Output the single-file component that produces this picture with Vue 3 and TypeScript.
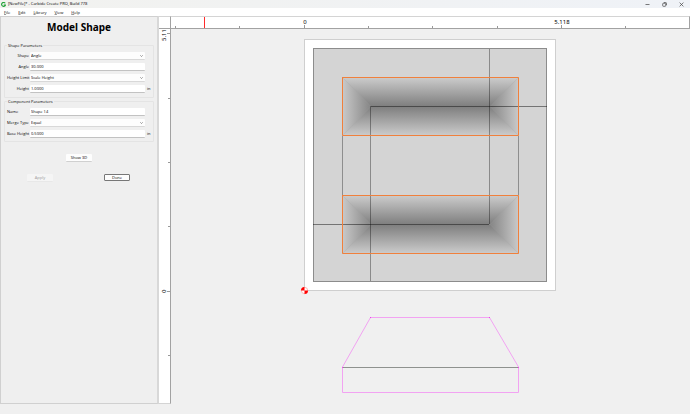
<script setup lang="ts">
import { ref } from 'vue'

const menus = ['File', 'Edit', 'Library', 'View', 'Help']
const shape = ref('Angle')
const angle = ref('30.000')
const limit = ref('Scale Height')
const height = ref('1.0000')
const name = ref('Shape 14')
const merge = ref('Equal')
const base = ref('0.5000')

// Ruler marks, measured from the start of each ruler
const topTicks = [5, 69, 134, 198, 262, 327, 391, 455]
const sideTicks = [4, 69, 133, 197, 262, 326]

// Top edges of the two selected angle shapes on the stock
const bevels = [48, 166]
</script>

<template>
  <div class="window">
    <header class="titlebar">
      <svg class="logo" width="5" height="5" viewBox="0 0 10 10">
        <path d="M8.5 2.6A4 4 0 1 0 9 6H5.5" fill="none" stroke="#23a33a" stroke-width="2.2" />
      </svg>
      <span class="caption">[NewFile]* - Carbide Create PRO, Build 778</span>
      <div class="controls">
        <button type="button" aria-label="Minimize">
          <svg width="5" height="5"><path d="M0.5 2.5h4" /></svg>
        </button>
        <button type="button" aria-label="Restore">
          <svg width="5" height="5"><rect x="0.7" y="1.3" width="3" height="3" rx="0.6" /><path d="M1.8 0.5h1.8q.9 0 .9.9v1.8" /></svg>
        </button>
        <button type="button" aria-label="Close">
          <svg width="5" height="5"><path d="M0.6 0.6l3.8 3.8M4.4 0.6l-3.8 3.8" /></svg>
        </button>
      </div>
    </header>

    <nav class="menubar">
      <a v-for="m in menus" :key="m" href="#"><u>{{ m[0] }}</u>{{ m.slice(1) }}</a>
    </nav>

    <main class="body">
      <form class="panel" @submit.prevent>
        <h1>Model Shape</h1>
        <fieldset class="first">
          <legend>Shape Parameters</legend>
          <div class="row">
            <label for="shape">Shape</label>
            <div class="pick">
              <select id="shape" v-model="shape"><option>Angle</option><option>Round</option><option>Flat</option></select>
              <svg width="3" height="2"><path d="M0.3 0.3l1.2 1.2 1.2-1.2" /></svg>
            </div>
          </div>
          <div class="row">
            <label for="angle">Angle</label>
            <input id="angle" v-model="angle" type="text" />
          </div>
          <div class="row">
            <label for="limit">Height Limit</label>
            <div class="pick">
              <select id="limit" v-model="limit"><option>Scale Height</option><option>No Limit</option></select>
              <svg width="3" height="2"><path d="M0.3 0.3l1.2 1.2 1.2-1.2" /></svg>
            </div>
          </div>
          <div class="row">
            <label for="height">Height</label>
            <input id="height" v-model="height" type="text" />
            <span>in</span>
          </div>
        </fieldset>
        <fieldset class="second">
          <legend>Component Parameters</legend>
          <div class="row">
            <label for="name">Name</label>
            <input id="name" v-model="name" type="text" />
          </div>
          <div class="row">
            <label for="merge">Merge Type</label>
            <div class="pick">
              <select id="merge" v-model="merge"><option>Equal</option><option>Add</option><option>Subtract</option></select>
              <svg width="3" height="2"><path d="M0.3 0.3l1.2 1.2 1.2-1.2" /></svg>
            </div>
          </div>
          <div class="row">
            <label for="base">Base Height</label>
            <input id="base" v-model="base" type="text" />
            <span>in</span>
          </div>
        </fieldset>
        <div class="preview"><button type="button">Show 3D</button></div>
        <div class="actions">
          <button type="button" disabled>Apply</button>
          <button type="submit" class="default">Done</button>
        </div>
      </form>

      <section class="workspace">
        <div class="corner"></div>
        <svg class="ruler top">
          <path v-for="(x, i) in topTicks" :key="x" :d="`M${x - 0.5} 12V${i === 2 || i === 6 ? 8 : 9}`" stroke="#999" />
          <path d="M33.5 0V12" stroke="#ff2a2a" />
          <text x="134" y="7" text-anchor="middle">0</text>
          <text x="391" y="7" text-anchor="middle">5.118</text>
        </svg>
        <svg class="ruler side">
          <path v-for="(y, i) in sideTicks" :key="y" :d="`M12 ${y + 0.5}H${i === 0 || i === 4 ? 8 : 9}`" stroke="#999" />
          <text transform="translate(7 12) rotate(-90)">5.11</text>
          <text transform="translate(7 264) rotate(-90)">0</text>
        </svg>
        <svg class="canvas">
          <defs>
            <linearGradient id="down" x1="0" y1="0" x2="0" y2="1">
              <stop offset="0" stop-color="#cdcdcd" /><stop offset="1" stop-color="#7e7e7e" />
            </linearGradient>
            <linearGradient id="up" x1="0" y1="1" x2="0" y2="0">
              <stop offset="0" stop-color="#cdcdcd" /><stop offset="1" stop-color="#7e7e7e" />
            </linearGradient>
            <linearGradient id="right" x1="0" y1="0" x2="1" y2="0">
              <stop offset="0" stop-color="#cacaca" /><stop offset="1" stop-color="#858585" />
            </linearGradient>
            <linearGradient id="left" x1="1" y1="0" x2="0" y2="0">
              <stop offset="0" stop-color="#cacaca" /><stop offset="1" stop-color="#858585" />
            </linearGradient>
          </defs>
          <rect x="133.5" y="10.5" width="251" height="251" fill="#fff" stroke="#cfcfcf" />
          <rect x="142.5" y="19.5" width="233" height="233" fill="#d4d4d4" stroke="#8c8c8c" />
          <g v-for="y in bevels" :key="y" :transform="`translate(171 ${y})`">
            <path d="M0 0H177V59H0z" fill="#a6a6a6" />
            <path d="M0 0H177L148 29.5H29z" fill="url(#down)" />
            <path d="M0 59H177L148 29.5H29z" fill="url(#up)" />
            <path d="M0 0L29 29.5L0 59z" fill="url(#right)" />
            <path d="M177 0L148 29.5L177 59z" fill="url(#left)" />
          </g>
          <g fill="none" stroke="#8e8e8e">
            <path d="M171.5 107V166M347.5 107V166" />
            <path d="M199.5 77V252M318.5 20V195" stroke="#000" stroke-opacity="0.35" />
            <path d="M200 77.5H376M142 195.5H318" stroke="#000" stroke-opacity="0.45" />
          </g>
          <g fill="none" stroke="#f0803c">
            <path v-for="y in bevels" :key="y" :d="`M171 ${y + 0.5}H347.5V${y + 58.5}H171.5V${y}`" />
          </g>
          <g transform="translate(133.5 261.5)">
            <circle r="3.5" fill="#fff" />
            <circle r="3.2" fill="none" stroke="#f88" stroke-width="0.6" />
            <path d="M0 0H-3.5A3.5 3.5 0 0 1 0 -3.5zM0 0H3.5A3.5 3.5 0 0 1 0 3.5z" fill="#f00" />
          </g>
          <g fill="none" stroke="#f2a3f2">
            <path d="M171.5 338L199.5 288.5H318.5L347.5 338" />
            <path d="M171.5 338V363.5H347.5V338" />
            <path d="M171 338.5H348" stroke="#8f928f" />
          </g>
          <path d="M199 288h1v1h-1zM318 288h1v1h-1zM171 338h1v1h-1zM347 338h1v1h-1z" fill="#ef45ef" />
        </svg>
      </section>
    </main>
    <footer class="status"></footer>
  </div>
</template>

<style>
body { margin: 0; background: #f0f0f0; }
</style>

<style scoped>
* { box-sizing: border-box; }
.window {
  display: grid;
  grid-template-rows: 8px 8px 1fr 10px;
  height: 100vh;
  overflow: hidden;
  background: #f0f0f0;
  color: #000;
  font-family: "Open Sans", "Noto Sans", sans-serif;
  font-size: 4px;
  line-height: 8px;
}
.titlebar {
  display: flex;
  align-items: center;
  gap: 2px;
  padding-left: 1px;
  background: linear-gradient(90deg, #f2f2ef, #eff2f7);
}
.caption { white-space: nowrap; }
.controls { display: flex; gap: 12px; margin-left: auto; padding-right: 6px; }
.controls button { display: flex; padding: 0; border: 0; background: none; }
.controls svg { fill: none; stroke: #444; stroke-width: 0.7; }
.menubar { display: flex; gap: 8px; padding-left: 4px; background: #fff; line-height: 9px; }
.menubar a { color: #000; text-decoration: none; }
u { text-decoration-thickness: 1px; text-decoration-color: #999; text-underline-offset: 0; }
.body { display: grid; grid-template-columns: 159px 1fr; min-height: 0; }
.panel {
  border: 1px solid #d0d0d0;
  border-right: 2px solid #d8d8d8;
  padding: 0 3px;
  background: #efefef;
}
h1 {
  margin: 3px 0 11px;
  color: #000;
  font-family: "Noto Sans", sans-serif;
  font-size: 10px;
  line-height: 14px;
  text-align: center;
}
fieldset { position: relative; margin: 0; padding: 6px 0 4px 2px; border: 1px solid #e4e4e4; border-radius: 1px; }
legend { position: absolute; top: -4px; left: 2px; padding: 0 1px; background: #efefef; }
.second { margin-top: 3px; padding-bottom: 3px; }
.row {
  display: grid;
  grid-template-columns: 22px 1fr 7px;
  gap: 1px;
  height: 8px;
  margin-bottom: 3px;
}
.row:last-child { margin-bottom: 0; }
.row label { white-space: nowrap; }
.first label { text-align: right; }
.row span { padding-left: 1px; }
input, select {
  display: block;
  width: 100%;
  height: 8px;
  min-width: 0;
  margin: 0;
  padding: 0 1px;
  border: 0;
  border-bottom: 1px solid #c2c2c2;
  border-radius: 1px;
  outline: 0;
  background: #fff;
  color: #000;
  font: inherit;
  line-height: 7px;
  appearance: none;
}
select { border-bottom-color: #d8d8d8; background: #fdfdfd; }
.pick { display: grid; align-items: center; }
.pick > * { grid-area: 1 / 1; }
.pick svg { justify-self: end; margin-right: 2px; fill: none; stroke: #555; stroke-width: 0.6; pointer-events: none; }
.preview { display: flex; justify-content: center; margin-top: 12px; }
.actions { display: flex; justify-content: space-between; margin-top: 12px; padding: 0 24px 0 23px; }
.preview button, .actions button {
  width: 26px;
  height: 8px;
  padding: 0;
  border: 0;
  border-bottom: 1px solid #d0d0d0;
  border-radius: 1px;
  background: #fdfdfd;
  color: #000;
  font: inherit;
  line-height: 7px;
}
.actions button:disabled { border-color: #e8e8e8; background: #f5f5f5; color: #999; }
.actions .default { height: 7px; border: 1px solid #777; line-height: 5px; }
.workspace {
  display: grid;
  grid-template-columns: 12px 1fr;
  grid-template-rows: 13px 1fr;
  min-width: 0;
  min-height: 0;
}
.corner, .ruler { background: #fff; border: solid #a2a2a2; border-width: 0 1px 1px 0; }
.corner, .top { border-top: 1px solid #d4d4d4; }
.ruler { display: block; overflow: hidden; fill: #000; font-family: "Noto Sans", sans-serif; font-size: 6px; }
.top { width: 100%; height: 13px; }
.side { width: 12px; height: 100%; border-bottom-color: #d4d4d4; }
.canvas { display: block; width: 100%; height: 100%; }
</style>
